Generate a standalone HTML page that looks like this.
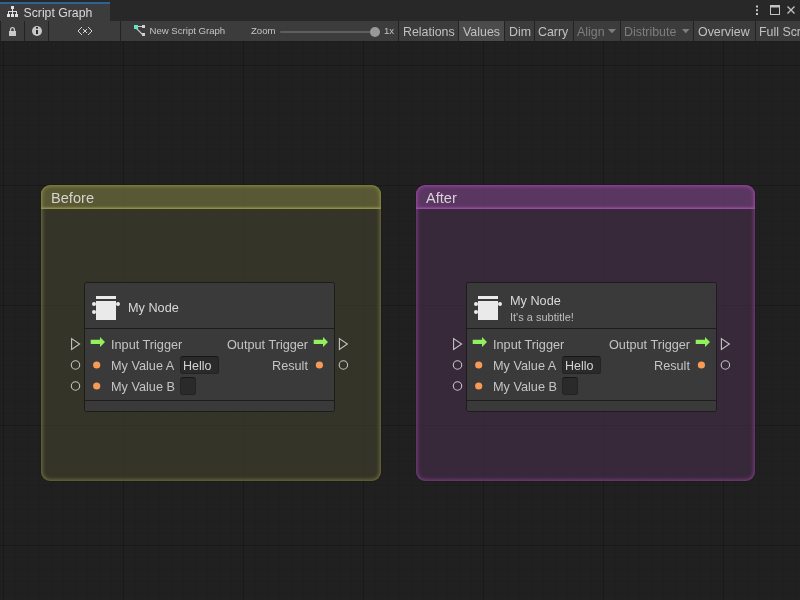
<!DOCTYPE html>
<html><head><meta charset="utf-8">
<style>
*{margin:0;padding:0;box-sizing:border-box}
html,body{width:800px;height:600px;overflow:hidden;background:#202020;font-family:"Liberation Sans",sans-serif;-webkit-font-smoothing:antialiased}
body{will-change:transform}
.abs{position:absolute}
svg{position:absolute;overflow:visible}
#tabbar{left:0;top:0;width:800px;height:21px;background:#282828}
#tab{left:0;top:2px;width:110px;height:19px;background:#3c3c3c;border-top:2px solid #2d6393}
#tabtxt{left:23.5px;top:5px;font-size:12.25px;color:#dadada;white-space:nowrap;line-height:16px}
#toolbar{left:0;top:21px;width:800px;height:20px;background:#3c3c3c}
.sep{position:absolute;top:21px;width:1px;height:20px;background:#232323}
.tb{position:absolute;top:22px;height:20px;line-height:20px;font-size:12.4px;color:#c0c0c0;white-space:nowrap}
.sm{font-size:9.6px;color:#c4c4c4;top:21px}
.dis{color:#7e7e7e}
#graph{left:0;top:41px;width:800px;height:559px;background-color:#202020;
background-image:
 linear-gradient(to right,rgba(0,0,0,0.16) 1px,transparent 1px),
 linear-gradient(to bottom,rgba(0,0,0,0.16) 1px,transparent 1px),
 linear-gradient(to right,rgba(0,0,0,0.07) 1px,transparent 1px),
 linear-gradient(to bottom,rgba(0,0,0,0.07) 1px,transparent 1px);
background-size:120px 120px,120px 120px,12px 12px,12px 12px;
background-position:3px 24px,3px 24px,3px 0px,3px 0px}
.group{position:absolute;top:185px;height:296px;border-radius:9px}
.gclip{position:absolute;left:0;top:0;right:0;bottom:0;border-radius:9px;overflow:hidden}
.ghead{position:absolute;left:0;top:0;right:0;height:24px;font-size:14.6px;line-height:26px;padding-left:10px;color:#d4d4cc}
.gbody{position:absolute;left:0;top:24px;right:0;bottom:0}
.gglow{position:absolute;left:0;top:0;right:0;bottom:0;border-radius:9px}
.node{position:absolute;top:282px;height:130px;background:#3a3a3a;border:1px solid #1c1c1c;border-radius:2.5px}
.nhsep{position:absolute;left:0;right:0;top:45px;height:1px;background:#1c1c1c}
.nfsep{position:absolute;left:0;right:0;top:117px;height:1px;background:#1e1e1e}
.lbl{position:absolute;font-size:12.7px;color:#c4c4c4;white-space:nowrap;line-height:14px}
.field{position:absolute;background:#2a2a2a;border:1px solid #232323;border-top-color:#161616;border-radius:3px;font-size:12.5px;color:#d4d4d4;line-height:18px;padding-left:2px}
</style></head><body>
<div id="tabbar" class="abs"></div>
<div id="tab" class="abs"></div>
<!-- hierarchy icon -->
<svg style="left:0;top:0" width="22" height="21" fill="#e0e0e0">
 <rect x="11" y="6" width="3" height="3"/><rect x="12" y="9" width="1" height="2"/>
 <rect x="8" y="11" width="9" height="1"/>
 <rect x="8" y="12" width="1" height="2"/><rect x="12" y="12" width="1" height="2"/><rect x="16" y="12" width="1" height="2"/>
 <rect x="7" y="14" width="3" height="3"/><rect x="11" y="14" width="3" height="3"/><rect x="15" y="14" width="3" height="3"/>
</svg>
<div id="tabtxt" class="abs">Script Graph</div>
<!-- window controls -->
<svg style="left:740px;top:0" width="60" height="21" fill="#c4c4c4">
 <rect x="16" y="5.5" width="2" height="2"/><rect x="16" y="9.25" width="2" height="2"/><rect x="16" y="13" width="2" height="2"/>
 <rect x="30.5" y="5.5" width="9" height="9" fill="none" stroke="#c4c4c4" stroke-width="1"/>
 <rect x="30" y="5" width="10" height="2.5"/>
 <path d="M47.5 6.5 L54.5 13.5 M54.5 6.5 L47.5 13.5" stroke="#c4c4c4" stroke-width="1.3" fill="none"/>
</svg>
<div id="toolbar" class="abs"></div>
<div id="graph" class="abs"></div>

<div class="sep" style="left:0"></div>
<div class="sep" style="left:24px"></div>
<div class="sep" style="left:48px"></div>
<div class="sep" style="left:120px"></div>
<div class="sep" style="left:398px"></div>
<div class="sep" style="left:458px"></div>
<div class="sep" style="left:504px"></div>
<div class="sep" style="left:534px"></div>
<div class="sep" style="left:573px"></div>
<div class="sep" style="left:620px"></div>
<div class="sep" style="left:693px"></div>
<div class="sep" style="left:755px"></div>

<!-- lock -->
<svg style="left:0;top:21px" width="24" height="20" fill="#c8c8c8">
 <rect x="9" y="10" width="7" height="5"/>
 <path d="M10.6 10.5 V8.5 A1.9 1.9 0 0 1 14.4 8.5 V10.5" fill="none" stroke="#c8c8c8" stroke-width="1.3"/>
</svg>
<!-- info -->
<svg style="left:24px;top:21px" width="24" height="20">
 <circle cx="13" cy="10" r="5" fill="#c8c8c8"/>
 <rect x="12" y="6" width="2" height="1.7" fill="#2e2e2e"/>
 <rect x="12" y="9" width="2" height="4" fill="#2e2e2e"/>
</svg>
<!-- <x> -->
<svg style="left:48px;top:21px" width="72" height="20" fill="#d4d4d4" shape-rendering="crispEdges"><rect x="33" y="6" width="1" height="1"/><rect x="32" y="7" width="1" height="1"/><rect x="31" y="8" width="1" height="1"/><rect x="30" y="9" width="1" height="1"/><rect x="30" y="10" width="1" height="1"/><rect x="31" y="11" width="1" height="1"/><rect x="32" y="12" width="1" height="1"/><rect x="33" y="13" width="1" height="1"/><rect x="40" y="6" width="1" height="1"/><rect x="41" y="7" width="1" height="1"/><rect x="42" y="8" width="1" height="1"/><rect x="43" y="9" width="1" height="1"/><rect x="43" y="10" width="1" height="1"/><rect x="42" y="11" width="1" height="1"/><rect x="41" y="12" width="1" height="1"/><rect x="40" y="13" width="1" height="1"/><rect x="35" y="8" width="1" height="1"/><rect x="38" y="8" width="1" height="1"/><rect x="35" y="11" width="1" height="1"/><rect x="38" y="11" width="1" height="1"/><rect x="36" y="9" width="2" height="2"/></svg>
<!-- new script graph icon -->
<svg style="left:120px;top:21px" width="30" height="20">
 <path d="M17 5.5 H22.5 M16.5 7.5 L22.5 13.5" stroke="#c8c8c8" stroke-width="1.1" fill="none"/>
 <rect x="22" y="4" width="3" height="3" fill="#d0d0d0"/>
 <rect x="22" y="12" width="3" height="3" fill="#d0d0d0"/>
 <rect x="14" y="4" width="4" height="4" fill="#5ee6c4"/>
</svg>

<div class="tb sm" style="left:149.5px">New Script Graph</div>
<div class="tb sm" style="left:251px">Zoom</div>
<div class="abs" style="left:280px;top:31px;width:93px;height:2px;background:#5e5e5e;border-radius:1px"></div>
<div class="abs" style="left:370px;top:27px;width:10px;height:10px;background:#999;border-radius:50%"></div>
<div class="tb sm" style="left:384px">1x</div>
<div class="tb" style="left:403px">Relations</div>
<div class="abs" style="left:459px;top:21px;width:45px;height:20px;background:#4b4b4b"></div>
<div class="tb" style="left:463px">Values</div>
<div class="tb" style="left:509px">Dim</div>
<div class="tb" style="left:538px">Carry</div>
<div class="tb dis" style="left:577px">Align</div>
<svg style="left:600px;top:21px" width="20" height="20"><path d="M8 8 H16 L12 12.3Z" fill="#7e7e7e"/></svg>
<div class="tb dis" style="left:624px">Distribute</div>
<svg style="left:675px;top:21px" width="20" height="20"><path d="M7 8 H14.5 L10.75 12.3Z" fill="#7e7e7e"/></svg>
<div class="tb" style="left:698px">Overview</div>
<div class="tb" style="left:759px">Full Screen</div>

<!-- groups -->
<div class="group" style="left:41px;width:340px;">
 <div class="gclip">
  <div class="ghead" style="background:rgba(112,112,63,0.7);box-shadow:inset 0 -2px 3px -1px rgba(170,170,80,0.95)">Before</div>
  <div class="abs" style="left:0;top:0;right:0;height:24px;border-radius:9px 9px 0 0;box-shadow:inset 0 0 3px 0 rgba(175,175,80,0.45)"></div>
  <div class="gbody" style="background:rgba(70,70,47,0.55)"></div>
 </div>
 <div class="gglow" style="box-shadow:0 0 0 1px rgba(0,0,0,0.12),inset 0 0 4px 1px rgba(150,150,72,0.7)"></div>
</div>
<div class="group" style="left:416px;width:339px;">
 <div class="gclip">
  <div class="ghead" style="color:#dad2da;background:rgba(116,65,125,0.7);box-shadow:inset 0 -2px 3px -1px rgba(185,85,195,0.95)">After</div>
  <div class="abs" style="left:0;top:0;right:0;height:24px;border-radius:9px 9px 0 0;box-shadow:inset 0 0 3px 0 rgba(190,85,200,0.45)"></div>
  <div class="gbody" style="background:rgba(74,48,81,0.55)"></div>
 </div>
 <div class="gglow" style="box-shadow:0 0 0 1px rgba(0,0,0,0.12),inset 0 0 4px 1px rgba(165,75,175,0.7)"></div>
</div>

<!-- node 1 -->
<div class="node" style="left:84px;width:251px">
  <div class="nhsep"></div><div class="nfsep"></div>
</div>
<svg style="left:84px;top:282px" width="40" height="46" fill="#eaeaea">
 <rect x="12" y="14" width="20" height="3"/>
 <rect x="12" y="19" width="20" height="19"/>
 <circle cx="10" cy="22" r="2"/><circle cx="10" cy="30" r="2"/><circle cx="34" cy="22" r="2"/>
</svg>
<div class="lbl" style="left:128px;top:301px;color:#d8d8d8">My Node</div>
<div class="lbl" style="left:111px;top:338px">Input Trigger</div>
<div class="lbl" style="left:111px;top:359px">My Value A</div>
<div class="lbl" style="left:111px;top:380px">My Value B</div>
<div class="lbl" style="left:227px;top:338px">Output Trigger</div>
<div class="lbl" style="left:272px;top:359px">Result</div>
<div class="field" style="left:180px;top:356px;width:39px;height:18px">Hello</div>
<div class="field" style="left:180px;top:377px;width:16px;height:18px"></div>
<svg style="left:60px;top:330px" width="300" height="70">
 <path d="M11.6 8.6 L19.6 14 L11.6 19.4 Z" fill="none" stroke="#c4c4c4" stroke-width="1.1"/>
 <circle cx="15.5" cy="35" r="4.2" fill="none" stroke="#c4c4c4" stroke-width="1.1"/>
 <circle cx="15.5" cy="56" r="4.2" fill="none" stroke="#c4c4c4" stroke-width="1.1"/>
 <path d="M30.7 9.8 H40 V7 L45 12 L40 17 V14 H30.7 Z" fill="#92f05c"/>
 <circle cx="36.7" cy="35" r="3.6" fill="#f79a55"/>
 <circle cx="36.7" cy="56" r="3.6" fill="#f79a55"/>
 <path d="M253.7 9.8 H263 V7 L268 12 L263 17 V14 H253.7 Z" fill="#92f05c"/>
 <circle cx="259.4" cy="35" r="3.6" fill="#f79a55"/>
 <path d="M279.4 8.6 L287.4 14 L279.4 19.4 Z" fill="none" stroke="#c4c4c4" stroke-width="1.1"/>
 <circle cx="283.4" cy="35" r="4.2" fill="none" stroke="#c4c4c4" stroke-width="1.1"/>
</svg>

<!-- node 2 -->
<div class="node" style="left:466px;width:251px">
  <div class="nhsep"></div><div class="nfsep"></div>
</div>
<svg style="left:466px;top:282px" width="40" height="46" fill="#eaeaea">
 <rect x="12" y="14" width="20" height="3"/>
 <rect x="12" y="19" width="20" height="19"/>
 <circle cx="10" cy="22" r="2"/><circle cx="10" cy="30" r="2"/><circle cx="34" cy="22" r="2"/>
</svg>
<div class="lbl" style="left:510px;top:294px;color:#d8d8d8">My Node</div>
<div class="lbl" style="left:510px;top:310px;font-size:11px;color:#bdbdbd">It's a subtitle!</div>
<div class="lbl" style="left:493px;top:338px">Input Trigger</div>
<div class="lbl" style="left:493px;top:359px">My Value A</div>
<div class="lbl" style="left:493px;top:380px">My Value B</div>
<div class="lbl" style="left:609px;top:338px">Output Trigger</div>
<div class="lbl" style="left:654px;top:359px">Result</div>
<div class="field" style="left:562px;top:356px;width:39px;height:18px">Hello</div>
<div class="field" style="left:562px;top:377px;width:16px;height:18px"></div>
<svg style="left:442px;top:330px" width="300" height="70">
 <path d="M11.6 8.6 L19.6 14 L11.6 19.4 Z" fill="none" stroke="#c4c4c4" stroke-width="1.1"/>
 <circle cx="15.5" cy="35" r="4.2" fill="none" stroke="#c4c4c4" stroke-width="1.1"/>
 <circle cx="15.5" cy="56" r="4.2" fill="none" stroke="#c4c4c4" stroke-width="1.1"/>
 <path d="M30.7 9.8 H40 V7 L45 12 L40 17 V14 H30.7 Z" fill="#92f05c"/>
 <circle cx="36.7" cy="35" r="3.6" fill="#f79a55"/>
 <circle cx="36.7" cy="56" r="3.6" fill="#f79a55"/>
 <path d="M253.7 9.8 H263 V7 L268 12 L263 17 V14 H253.7 Z" fill="#92f05c"/>
 <circle cx="259.4" cy="35" r="3.6" fill="#f79a55"/>
 <path d="M279.4 8.6 L287.4 14 L279.4 19.4 Z" fill="none" stroke="#c4c4c4" stroke-width="1.1"/>
 <circle cx="283.4" cy="35" r="4.2" fill="none" stroke="#c4c4c4" stroke-width="1.1"/>
</svg>

</body></html>
